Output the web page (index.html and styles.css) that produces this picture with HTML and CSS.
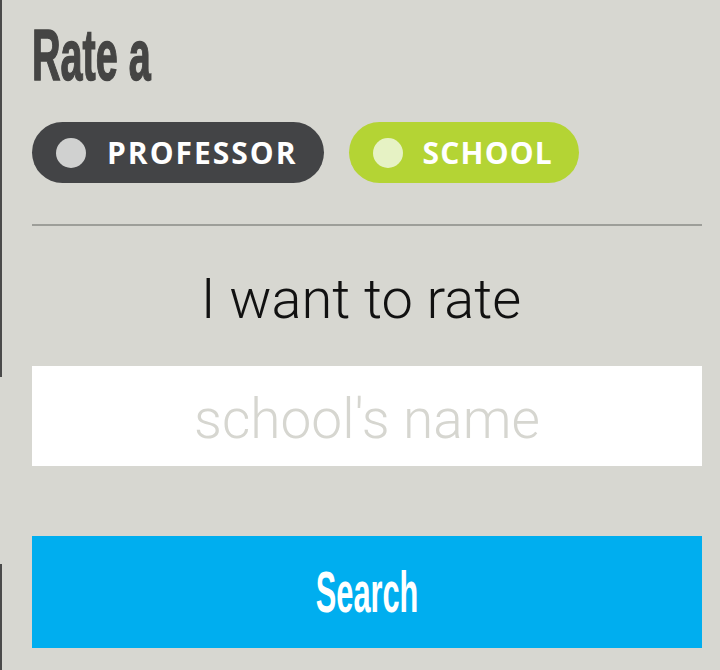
FILE: index.html
```html
<!DOCTYPE html>
<html>
<head>
<meta charset="utf-8">
<link rel="stylesheet" href="styles.css">
</head>
<body>
<div class="page">
  <h1 class="title"><span class="title-text">Rate a</span></h1>
  <div class="pills">
    <div class="pill pill-prof"><span class="dot"></span><span class="pill-label">PROFESSOR</span></div>
    <div class="pill pill-school"><span class="dot"></span><span class="pill-label">SCHOOL</span></div>
  </div>
  <hr class="divider">
  <p class="lead">I want to rate</p>
  <input class="search-input" type="text" placeholder="school's name">
  <button class="search-btn"><span class="search-text">Search</span></button>
</div>
</body>
</html>
```
FILE: styles.css
```css
html, body {
  margin: 0;
  padding: 0;
}
body {
  width: 720px;
  height: 670px;
  overflow: hidden;
  background:
    linear-gradient(#4a4a4a, #4a4a4a) 0 0 / 2px 377px no-repeat,
    linear-gradient(#4a4a4a, #4a4a4a) 0 564px / 2px 106px no-repeat,
    #d7d7d1;
}
.page {
  padding: 19px 18px 0 32px;
  display: flex;
  flex-direction: column;
}
.title {
  margin: 0;
  height: 72px;
  font-family: "Liberation Sans", Arial, sans-serif;
  font-weight: 700;
  font-size: 72px;
  line-height: 72px;
  color: #454544;
}
.title-text {
  display: inline-block;
  transform: scaleX(0.55);
  transform-origin: 0 50%;
  -webkit-text-stroke: 1.5px #454544;
}
.pills {
  margin-top: 31px;
  display: flex;
  gap: 25px;
}
.pill {
  height: 61px;
  border-radius: 31px;
  display: flex;
  align-items: center;
  padding: 0 26px 0 24px;
  box-sizing: border-box;
}
.pill-prof { background: #434446; }
.pill-school { background: #b4d434; }
.dot {
  width: 30px;
  height: 30px;
  border-radius: 50%;
  margin-right: 21px;
  flex: none;
}
.pill-prof .dot { background: #d0d1d0; }
.pill-school .dot { background: #e6f2c4; margin-right: 20px; }
.pill-label {
  font-family: "Open Sans", sans-serif;
  font-weight: 700;
  font-size: 30px;
  letter-spacing: 2px;
  color: #ffffff;
  line-height: 1;
}
.pill-school .pill-label {
  letter-spacing: 1.2px;
}
.divider {
  margin: 41px 0 0 0;
  border: 0;
  border-top: 2px solid #9d9e99;
  height: 0;
}
.lead {
  margin: 45px 0 0 0;
  text-align: center;
  font-family: Roboto, sans-serif;
  font-weight: 300;
  font-size: 56px;
  line-height: 56px;
  color: #111111;
  padding-right: 12px;
}
.search-input {
  margin-top: 39px;
  height: 100px;
  box-sizing: border-box;
  border: 0;
  outline: 0;
  background: #ffffff;
  padding: 6px 0 0 0;
  text-align: center;
  font-family: Roboto, sans-serif;
  font-weight: 300;
  font-size: 55px;
  color: #333;
  width: 100%;
}
.search-input::placeholder {
  color: #d6d6d0;
}
.search-btn {
  margin-top: 70px;
  height: 112px;
  width: 100%;
  border: 0;
  padding: 0;
  background: #00aeef;
  font-family: "Liberation Sans", Arial, sans-serif;
  font-weight: 700;
  font-size: 57px;
  line-height: 112px;
  color: #ffffff;
}
.search-text {
  display: inline-block;
  transform: scaleX(0.54);
  transform-origin: 50% 50%;
}
```
